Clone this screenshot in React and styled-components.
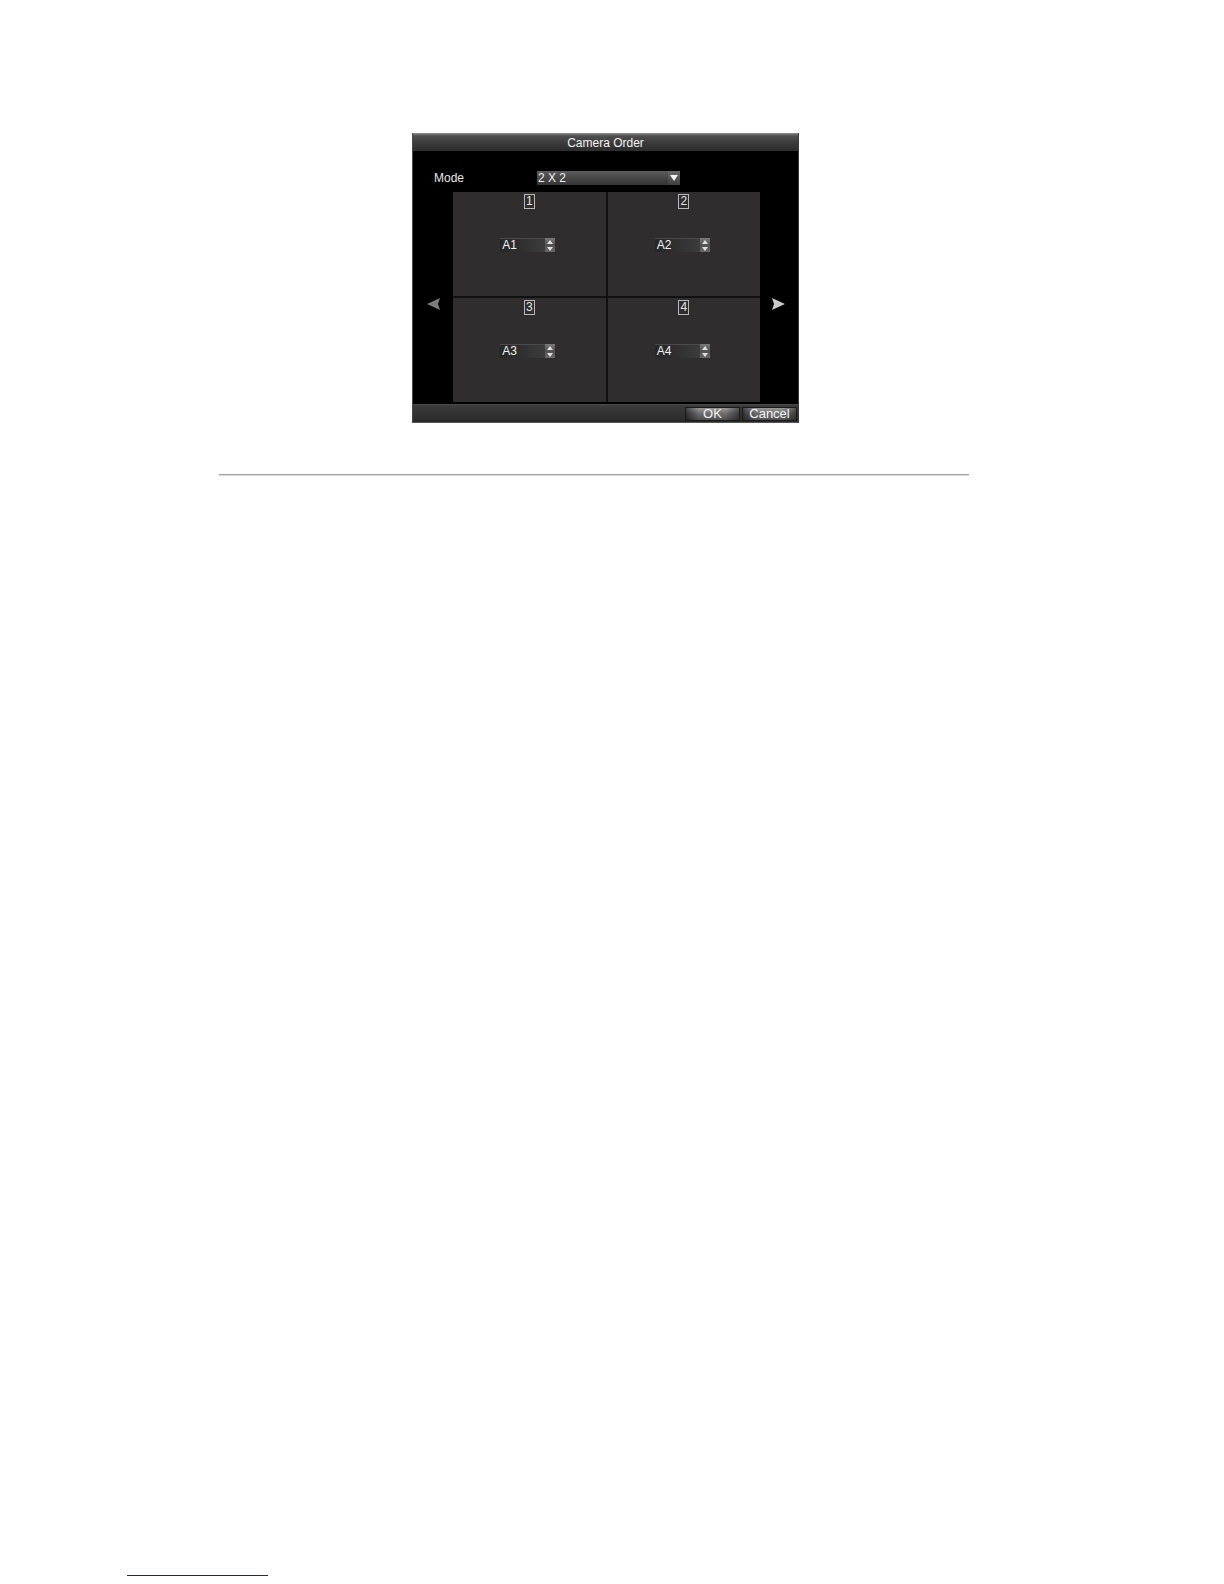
import React from "react";
import styled, { createGlobalStyle } from "styled-components";

const Global = createGlobalStyle`
  html, body { margin: 0; padding: 0; background: #ffffff; }
  body { font-family: "Liberation Sans", Arial, sans-serif; }
`;

const Page = styled.div`
  width: 1224px;
  min-height: 1584px;
  display: flex;
  flex-direction: column;
  box-sizing: border-box;
`;

const Dialog = styled.div`
  margin: 133px 0 0 412px;
  width: 387px;
  height: 290px;
  display: flex;
  flex-direction: column;
  background: #000;
  box-sizing: border-box;
  border-left: 1px solid #4a4a4a;
  border-right: 1px solid #3a3a3a;
  border-bottom: 1px solid #555;
`;

const TitleBar = styled.div`
  height: 18px;
  flex: none;
  display: flex;
  align-items: center;
  justify-content: center;
  color: #f2f2f2;
  font-size: 12px;
  background: linear-gradient(to bottom, #6e6e6e 0%, #4d4d4d 15%, #3a3a3a 55%, #2c2c2c 100%);
  border-top: 1px solid #8a8a8a;
  box-sizing: border-box;
`;

const Body = styled.div`
  flex: 1;
  display: flex;
  flex-direction: column;
  padding-top: 20px;
`;

const ModeRow = styled.div`
  display: flex;
  align-items: center;
  height: 14px;
  padding-left: 21px;
`;

const Label = styled.span`
  width: 103px;
  color: #e8e8e8;
  font-size: 12px;
`;

const Dropdown = styled.div`
  width: 143px;
  height: 14px;
  display: flex;
  align-items: center;
  justify-content: space-between;
  background: linear-gradient(to bottom, #5c5c5c 0%, #474747 50%, #353535 100%);
  color: #f0f0f0;
  font-size: 12px;
  padding-left: 1px;
  box-sizing: border-box;
`;

const DropButton = styled.div`
  width: 12px;
  height: 14px;
  display: flex;
  align-items: center;
  justify-content: center;
  background: linear-gradient(to bottom, #6a6a6a, #3e3e3e);
`;

const GridRow = styled.div`
  display: flex;
  margin-top: 7px;
  height: 210px;
`;

const Side = styled.div`
  width: ${(p) => p.$w}px;
  display: flex;
  align-items: center;
  justify-content: center;
  padding-top: 14px;
  box-sizing: border-box;
`;

const Grid = styled.div`
  width: 307px;
  display: grid;
  grid-template-columns: 1fr 1fr;
  grid-template-rows: 1fr 1fr;
  gap: 2px;
  background: #121112;
`;

const Cell = styled.div`
  background: #2f2d2e;
  display: flex;
  flex-direction: column;
  align-items: center;
  padding-top: 2px;
`;

const Num = styled.div`
  border: 1px solid #b8b8b8;
  color: #e4e4e4;
  font-size: 12px;
  line-height: 13px;
  padding: 0 1px;
`;

const Select = styled.div`
  margin-top: 29px;
  margin-right: 3px;
  width: 55px;
  height: 14px;
  display: flex;
  align-items: stretch;
`;

const SelectText = styled.div`
  flex: 1;
  display: flex;
  align-items: center;
  color: #f2f2f2;
  font-size: 12px;
  padding-left: 2px;
  background: linear-gradient(to right, #262626 0%, #2e2e2e 40%, #3c3c3c 100%);
  box-shadow: inset 0 1px 0 #4a4a4a;
`;

const Spinner = styled.div`
  width: 10px;
  display: flex;
  flex-direction: column;
  align-items: center;
  justify-content: space-around;
  background: linear-gradient(to bottom, #7a7a7a, #505050 50%, #6a6a6a);
`;

const Footer = styled.div`
  height: 18px;
  flex: none;
  display: flex;
  align-items: center;
  justify-content: flex-end;
  gap: 2px;
  padding-right: 1px;
  background: linear-gradient(to bottom, #3c3c3c, #2a2a2a);
  border-top: 1px solid #4a4a4a;
  box-sizing: border-box;
`;

const Button = styled.div`
  width: ${(p) => p.$w}px;
  height: 14px;
  display: flex;
  align-items: center;
  justify-content: center;
  color: #f4f4f4;
  font-size: 13px;
  background:
    linear-gradient(to right, rgba(0,0,0,0.55) 0%, rgba(0,0,0,0) 25%, rgba(0,0,0,0) 75%, rgba(0,0,0,0.45) 100%),
    linear-gradient(to bottom, #9a9a9a 0%, #6e6e6e 45%, #4e4e4e 100%);
  border: 1px solid #1a1a1a;
  box-sizing: border-box;
`;

const Rule = styled.div`
  margin: 51px 0 0 219px;
  width: 750px;
  height: 1px;
  background: #a3a3a3;
  border-bottom: 1px solid #dcdcdc;
`;

const FootLink = styled.div`
  margin: auto 0 8px 127px;
  width: 141px;
  height: 1px;
  background: #1d1d8c;
`;

const Tri = ({ dir, color, size = 14 }) => {
  const pts =
    dir === "left"
      ? "1,7 14,1 12,7 14,13"
      : "13,7 0,1 2,7 0,13";
  return (
    <svg width={size} height={size} viewBox="0 0 14 14">
      <polygon points={pts} fill={color} />
    </svg>
  );
};

const Down = () => (
  <svg width="8" height="6" viewBox="0 0 8 6">
    <polygon points="0,0 8,0 4,6" fill="#f4f4f4" />
  </svg>
);

const SpinArrows = () => (
  <>
    <svg width="6" height="4" viewBox="0 0 6 4">
      <polygon points="0,4 6,4 3,0" fill="#e0e0e0" />
    </svg>
    <svg width="6" height="4" viewBox="0 0 6 4">
      <polygon points="0,0 6,0 3,4" fill="#e0e0e0" />
    </svg>
  </>
);

const cells = [
  { n: "1", cam: "A1" },
  { n: "2", cam: "A2" },
  { n: "3", cam: "A3" },
  { n: "4", cam: "A4" },
];

export default function App() {
  return (
    <>
      <Global />
      <Page>
        <Dialog>
          <TitleBar>Camera Order</TitleBar>
          <Body>
            <ModeRow>
              <Label>Mode</Label>
              <Dropdown>
                <span>2 X 2</span>
                <DropButton>
                  <Down />
                </DropButton>
              </Dropdown>
            </ModeRow>
            <GridRow>
              <Side $w={40}>
                <Tri dir="left" color="#7c7c7c" />
              </Side>
              <Grid>
                {cells.map((c) => (
                  <Cell key={c.n}>
                    <Num>{c.n}</Num>
                    <Select>
                      <SelectText>{c.cam}</SelectText>
                      <Spinner>
                        <SpinArrows />
                      </Spinner>
                    </Select>
                  </Cell>
                ))}
              </Grid>
              <Side $w={38}>
                <Tri dir="right" color="#c8c8c8" />
              </Side>
            </GridRow>
          </Body>
          <Footer>
            <Button $w={55}>OK</Button>
            <Button $w={55}>Cancel</Button>
          </Footer>
        </Dialog>
        <Rule />
        <FootLink />
      </Page>
    </>
  );
}
